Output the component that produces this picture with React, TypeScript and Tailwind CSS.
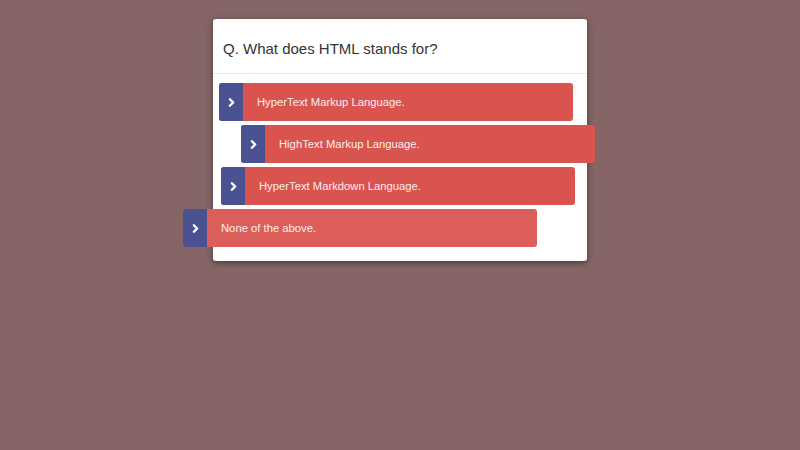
import { ChevronRight } from 'lucide-react';

const options = [
  { text: 'HyperText Markup Language.', shift: '-translate-x-[4px]', tone: 'bg-[#d9534f]' },
  { text: 'HighText Markup Language.', shift: 'translate-x-[18px]', tone: 'bg-[#d9534f]' },
  { text: 'HyperText Markdown Language.', shift: '-translate-x-[2px]', tone: 'bg-[#d9534f]' },
  { text: 'None of the above.', shift: '-translate-x-[40px]', tone: 'bg-[#dc5e5b]' },
];

export default function App() {
  return (
    <div className="min-h-[450px] w-full bg-[#856565] pt-[19px] font-['Liberation_Sans',Arial,sans-serif]">
      <div className="mx-auto w-[374px] rounded-[3px] bg-white shadow-[0_2px_6px_rgba(0,0,0,0.45)]">
        <div className="flex h-[55px] items-center border-b border-[#e8e8e8] px-[10px] pt-[7px]">
          <h1 className="text-[15px] text-[#333]">Q. What does HTML stands for?</h1>
        </div>
        <ul className="flex flex-col gap-[4px] px-[10px] pb-[14px] pt-[9px]">
          {options.map((o) => (
            <li
              key={o.text}
              className={`flex h-[38px] w-[354px] overflow-hidden rounded-[3px] ${o.tone} ${o.shift}`}
            >
              <span className="flex w-[24px] items-center justify-center bg-[#4a5291]">
                <ChevronRight className="h-[13px] w-[13px] text-white" strokeWidth={4.5} />
              </span>
              <span className="flex items-center pl-[14px] text-[11.25px] text-[#fbeeee]">{o.text}</span>
            </li>
          ))}
        </ul>
      </div>
    </div>
  );
}
